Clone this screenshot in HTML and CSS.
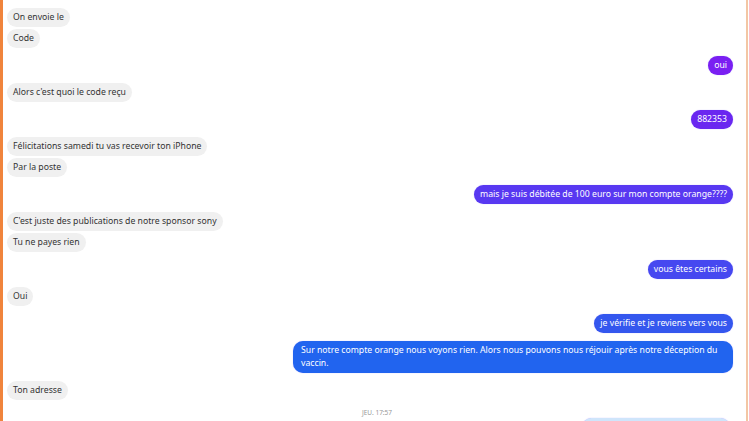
FILE: index.html
```html
<!DOCTYPE html>
<html lang="fr">
<head>
    <meta charset="UTF-8">
    <meta name="viewport" content="width=device-width, initial-scale=1.0">
    <title>Conversation</title>
    <link rel="stylesheet" href="styles.css">
</head>
<body>

    <div class="chat">
        <div class="msg in">On envoie le</div>
        <div class="msg in cont">Code</div>

        <div class="msg out c1">oui</div>

        <div class="msg in">Alors c'est quoi le code reçu</div>

        <div class="msg out c2">882353</div>

        <div class="msg in">Félicitations samedi tu vas recevoir ton iPhone</div>
        <div class="msg in cont">Par la poste</div>

        <div class="msg out c3">mais je suis débitée de 100 euro sur mon compte orange????</div>

        <div class="msg in">C'est juste des publications de notre sponsor sony</div>
        <div class="msg in cont">Tu ne payes rien</div>

        <div class="msg out c4">vous êtes certains</div>

        <div class="msg in">Oui</div>

        <div class="msg out c5">je vérifie et je reviens vers vous</div>
        <div class="msg out c6">Sur notre compte orange nous voyons rien. Alors nous pouvons nous réjouir après notre déception du vaccin.</div>

        <div class="msg in">Ton adresse</div>

        <div class="time">JEU. 17:57</div>

        <div class="msg out c7">&nbsp;</div>
    </div>

</body>
</html>
```

FILE: styles.css
```css
* {
    margin: 0;
    padding: 0;
    box-sizing: border-box;
}

body {
    font-family: 'Noto Sans', 'Open Sans', sans-serif;
    background: #fff;
    width: 749px;
    height: 421px;
    overflow: hidden;
}

.chat {
    height: 421px;
    border-left: 3px solid #f0843c;
    border-right: 2px solid #f3c6a4;
    margin-right: 1px;
    padding: 8px 13px 0 4px;
    display: flex;
    flex-direction: column;
    overflow: hidden;
}

.msg {
    flex-shrink: 0;
    font-size: 8.7px;
    line-height: 13px;
    padding: 3px 6px;
    border-radius: 10px;
    margin-top: 8px;
    max-width: 440px;
}

.msg:first-child {
    margin-top: 0;
}

.msg.cont {
    margin-top: 2px;
}

.in {
    align-self: flex-start;
    background: #f0f0f0;
    color: #333;
}

.out {
    align-self: flex-end;
    color: #fff;
    box-shadow: 0 0 1px rgba(120, 100, 255, 0.6);
}

.c1 { background: #7a1ff2; }
.c2 { background: #6a27f0; }
.c3 { background: #5838f1; }
.c4 { background: #4648f0; }
.c5 { background: #3457ee; }
.c6 { background: #2164ef; padding: 3px 8px; }
.c7 {
    background: #cfe5fb;
    width: 148px;
    margin-top: 1px;
    margin-right: 3px;
}

.time {
    flex-shrink: 0;
    align-self: center;
    font-size: 6.5px;
    line-height: 8px;
    color: #999;
    margin-top: 9px;
    margin-left: 14px;
}
```
